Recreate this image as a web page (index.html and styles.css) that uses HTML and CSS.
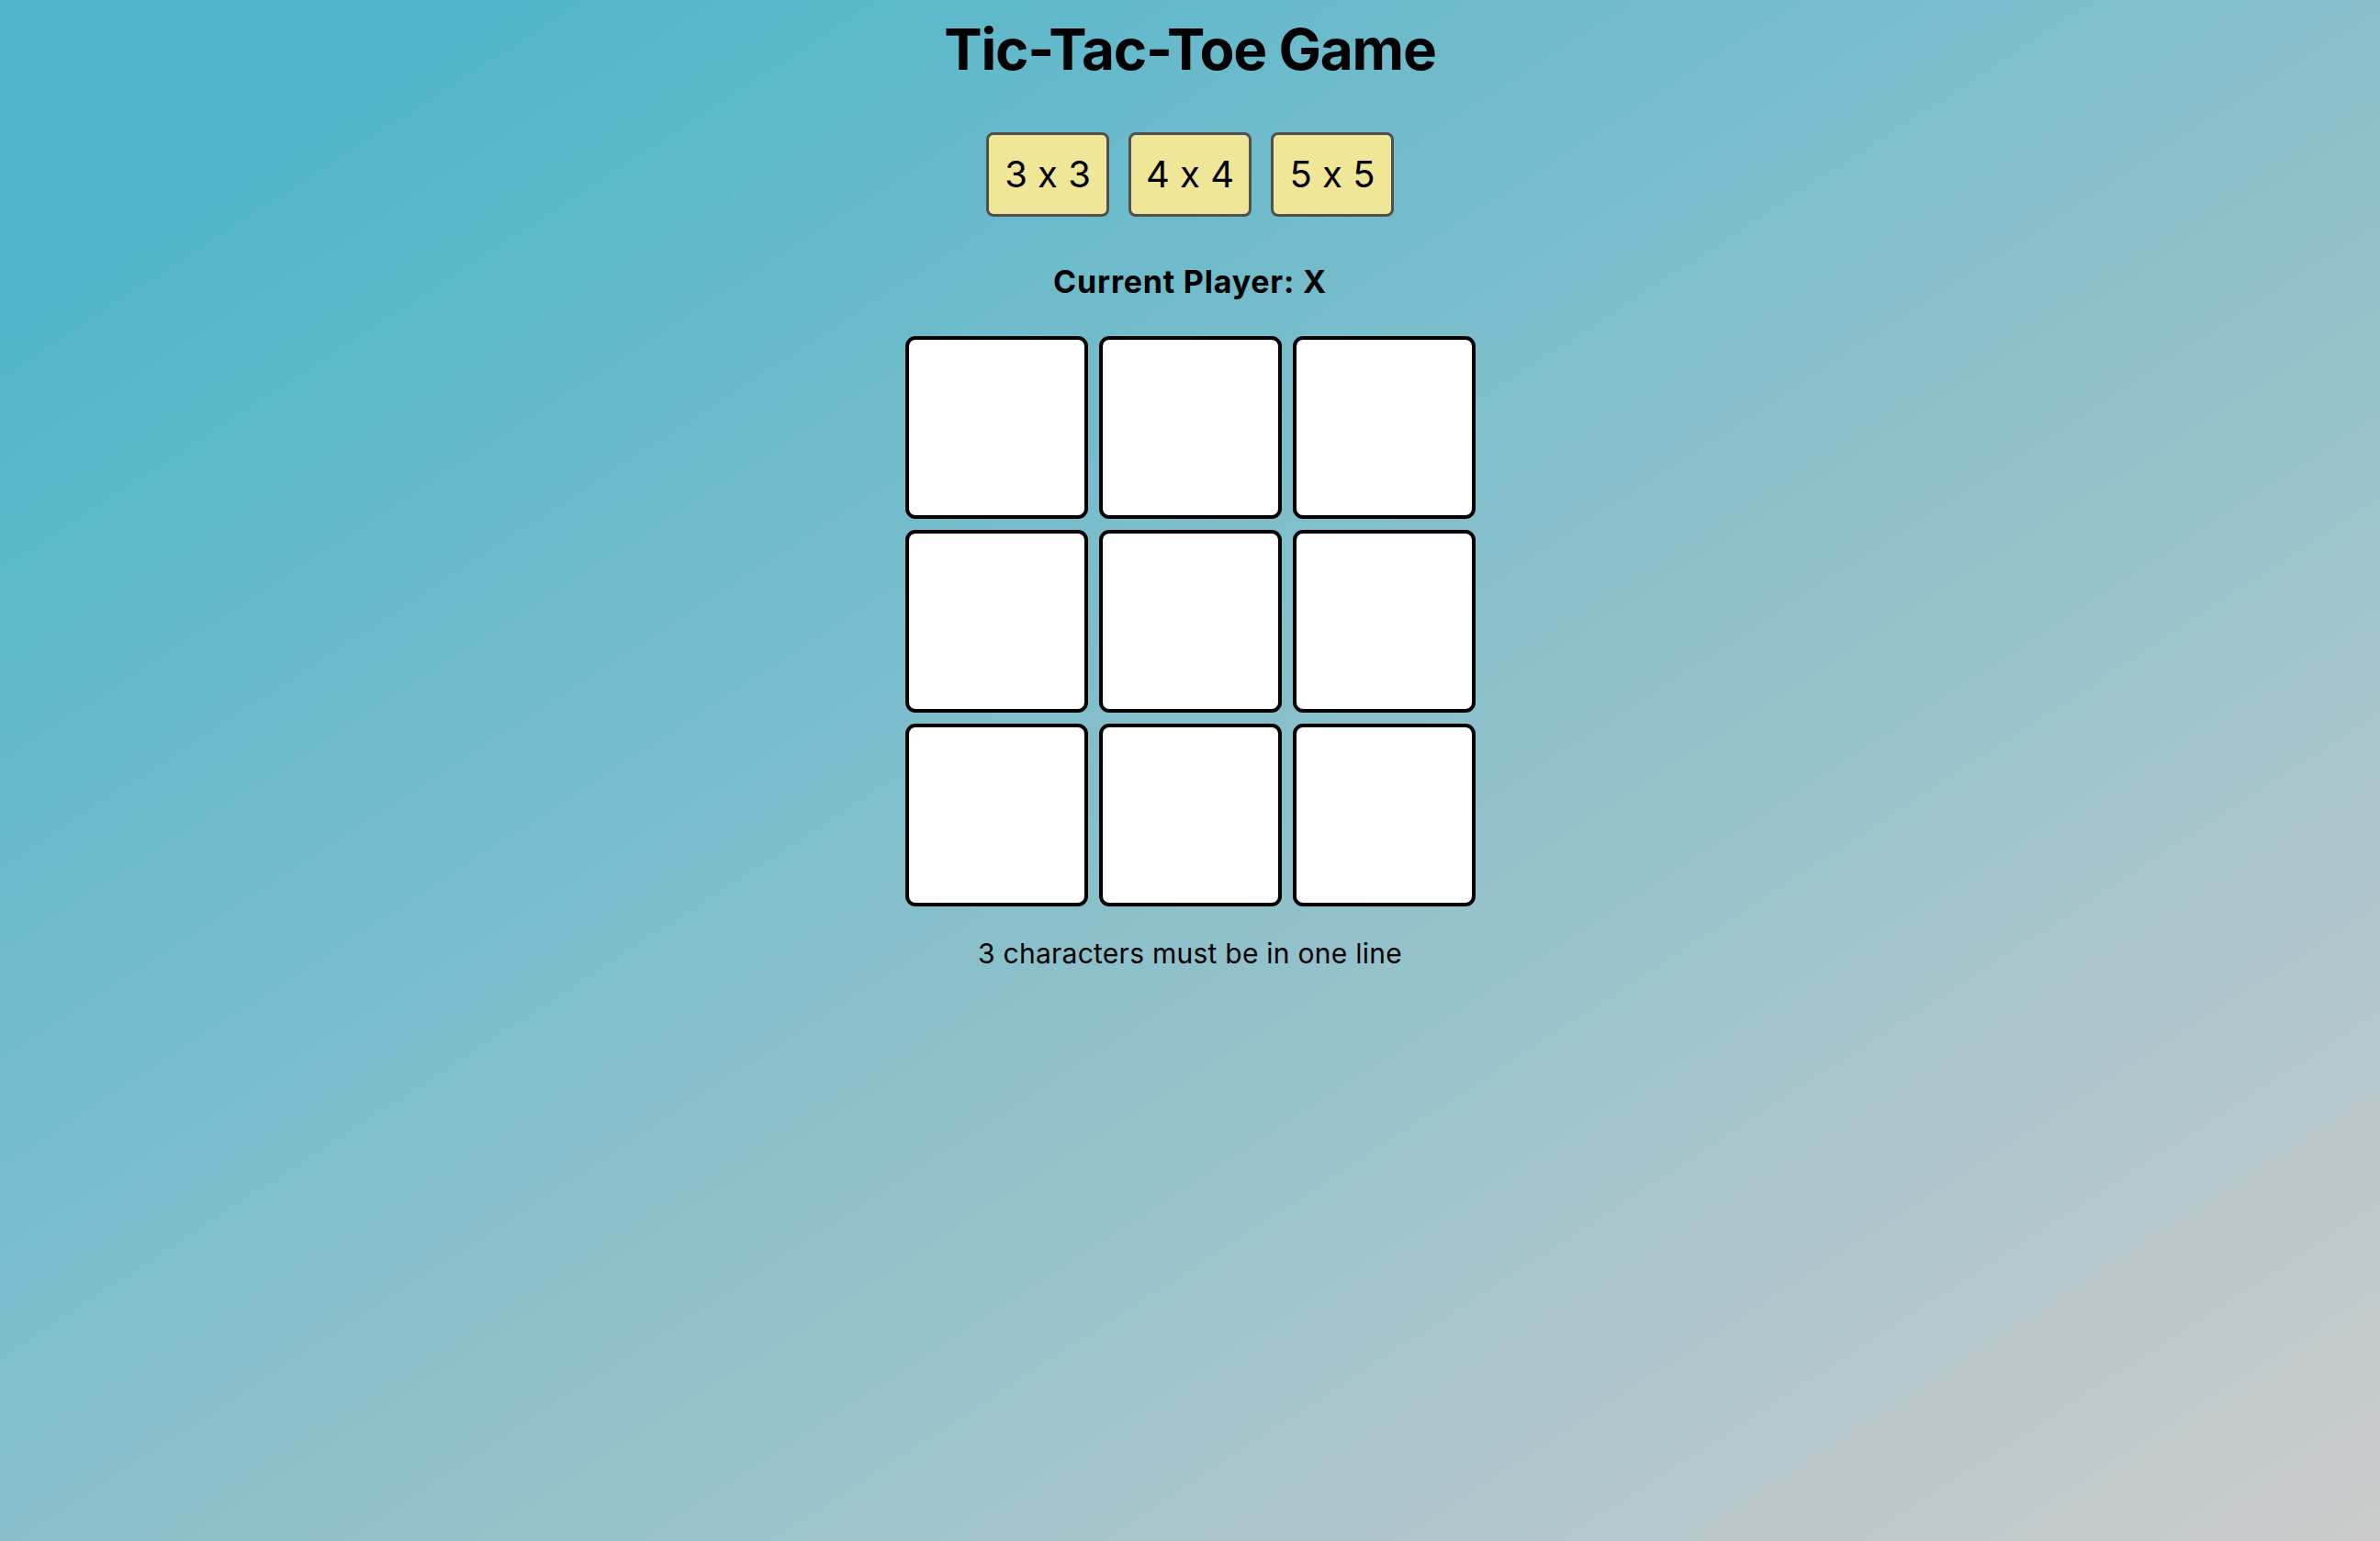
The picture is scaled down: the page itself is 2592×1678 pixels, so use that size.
FILE: index.html
```html
<!DOCTYPE html>
<html lang="en">
<head>
<meta charset="utf-8">
<title>Tic-Tac-Toe Game</title>
<link rel="stylesheet" href="styles.css">
</head>
<body>
<main class="app">
  <h1 class="title">Tic-Tac-Toe Game</h1>
  <div class="sizes">
    <button class="size-btn">3 x 3</button>
    <button class="size-btn">4 x 4</button>
    <button class="size-btn">5 x 5</button>
  </div>
  <div class="status">Current Player: X</div>
  <div class="board">
    <div class="cell"></div><div class="cell"></div><div class="cell"></div>
    <div class="cell"></div><div class="cell"></div><div class="cell"></div>
    <div class="cell"></div><div class="cell"></div><div class="cell"></div>
  </div>
  <p class="hint">3 characters must be in one line</p>
</main>
</body>
</html>
```
FILE: styles.css
```css
html, body {
  margin: 0;
  padding: 0;
  height: 100%;
}
body {
  font-family: Inter, "Noto Sans", sans-serif;
  font-feature-settings: "calt" 0;
  color: #000;
  background: linear-gradient(to bottom right, #50b6cb 10%, #cbcbcb 100%);
  min-height: 100vh;
}
.app {
  display: flex;
  flex-direction: column;
  align-items: center;
  padding-top: 15px;
}
.title {
  margin: 0;
  font-size: 62px;
  line-height: 78px;
  font-weight: 700;
  letter-spacing: -1.2px;
}
.sizes {
  display: flex;
  gap: 21px;
  margin-top: 51px;
}
.size-btn {
  box-sizing: border-box;
  width: 134px;
  height: 92px;
  padding: 0;
  font-family: Inter, "Noto Sans", sans-serif;
  font-feature-settings: "calt" 0;
  font-size: 40px;
  line-height: 48px;
  background: #efe697;
  border: 3px solid #505050;
  border-radius: 8px;
  color: #000;
}
.status {
  margin-top: 51px;
  font-size: 34px;
  line-height: 40px;
  font-weight: 700;
  letter-spacing: 0.8px;
}
.board {
  margin-top: 39px;
  display: grid;
  grid-template-columns: repeat(3, 199px);
  grid-auto-rows: 199px;
  gap: 12px;
}
.cell {
  background: #fff;
  border: 4px solid #000;
  border-radius: 11px;
}
.hint {
  margin: 33px 0 0;
  font-size: 30px;
  line-height: 36px;
  letter-spacing: 0.25px;
}
```
